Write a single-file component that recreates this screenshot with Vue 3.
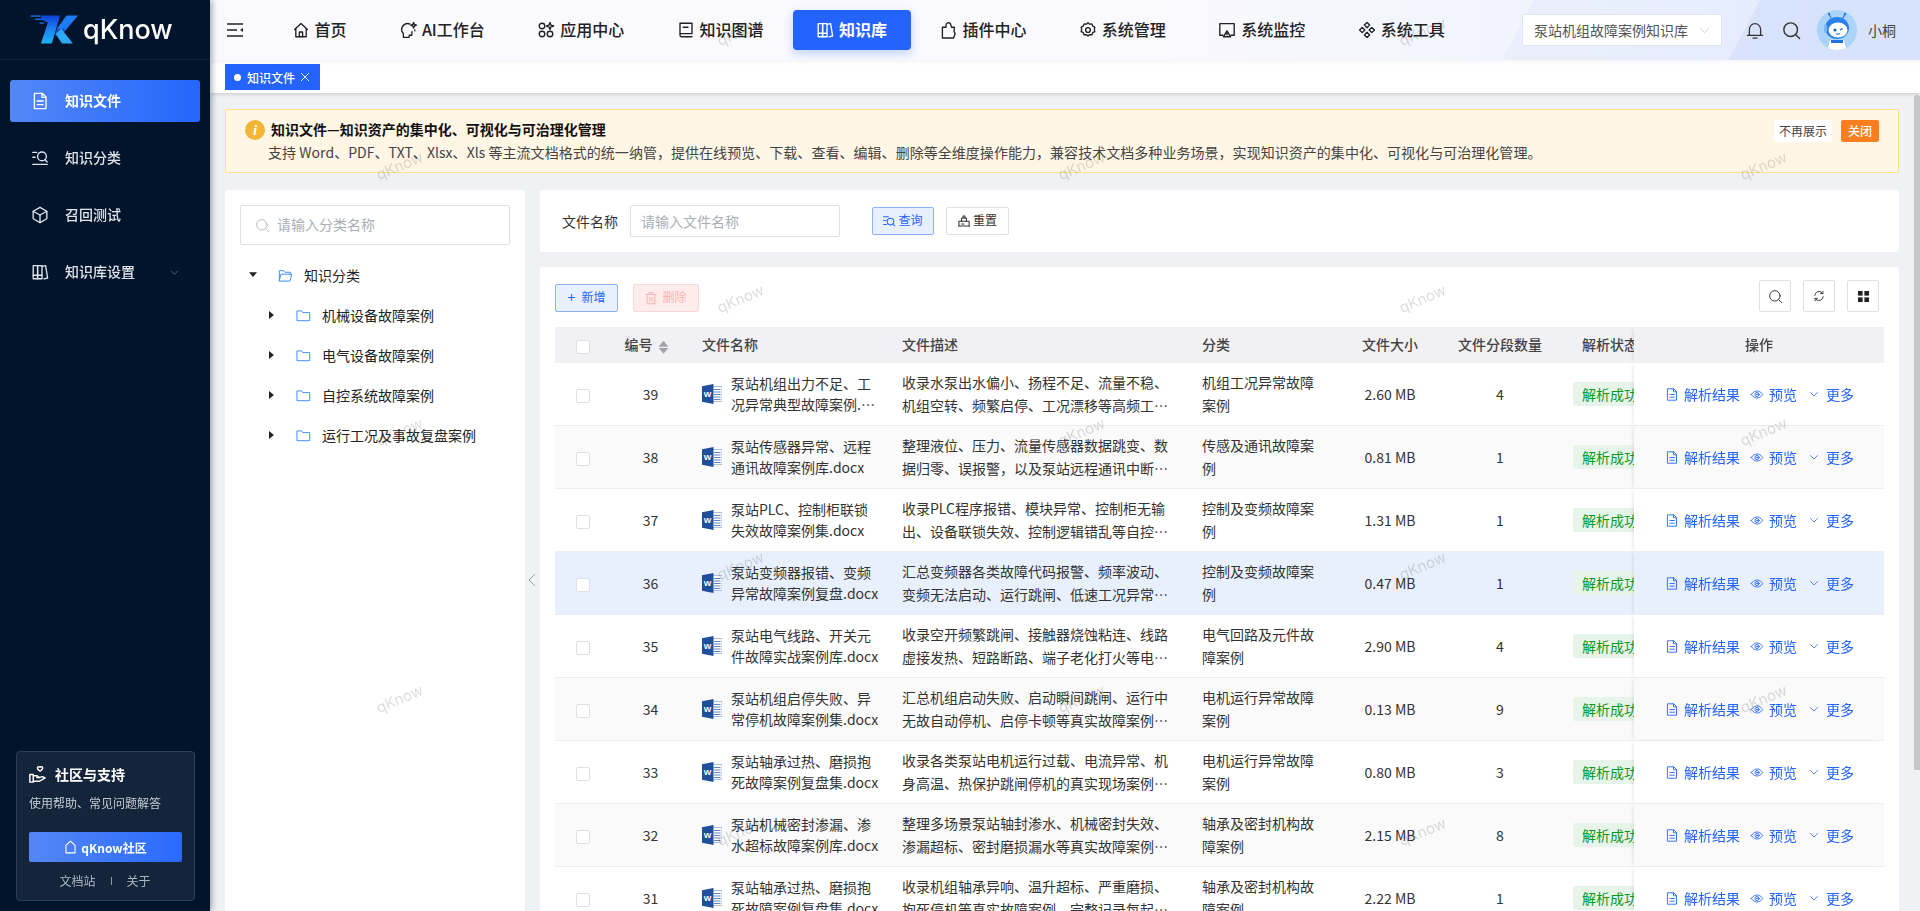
<script setup>
import { h } from 'vue'

const paths = {
  home: ['M4 11.5 12 4l8 7.5', 'M5.5 10.5V20.5h13V10.5', 'M10 20.5v-6h4v6'],
  ai: ['M14.5 4.6A7.5 7.5 0 0 0 4 11.5c0 2.2.9 3.7 2.2 4.9v4.8h7.3v-2.7h3.2l.3-4.5', 'M19 2.5l1 2.5 2.5 1-2.5 1-1 2.5-1-2.5-2.5-1 2.5-1z', 'M20.5 12v1'],
  apps: ['M10.5 7a3.5 3.5 0 1 1-7 0 3.5 3.5 0 0 1 7 0z', 'M10.5 17a3.5 3.5 0 1 1-7 0 3.5 3.5 0 0 1 7 0z', 'M20.5 17a3.5 3.5 0 1 1-7 0 3.5 3.5 0 0 1 7 0z', 'M17 2.5l1.2 3.3 3.3 1.2-3.3 1.2L17 11.5l-1.2-3.300-3.300-1.200 3.300-1.200z'],
  book: ['M4.500 18.500V3.500h15v13H6.500a2 2 0 0 0-2 2 2 2 0 0 0 2 2h13', 'M8.500 8.500h6'],
  library: ['M3.500 4h5.500v16.500H3.500z', 'M9 4h5.500v16.500H9z', 'M14.500 5l4.500-1 2.500 15.500-4.500 1', 'M3.500 16h11'],
  plugin: ['M5 8.500h4.500V6a3.200 3.200 0 0 1 5.500-2l1.500 4.500H20l-.500 5.500 1.500 2.500-2 5.500H5z'],
  gear: ['M12 2.800l2 1.900 2.900-.300 1 2.700 2.600 1.300-.600 2.800.600 2.800-2.600 1.300-1 2.700-2.900-.300-2 1.900-2-1.900-2.900.300-1-2.700-2.600-1.300.600-2.800-.600-2.800 2.600-1.300 1-2.700 2.900.300z', 'M15 12a3 3 0 1 1-6 0 3 3 0 0 1 6 0z'],
  monitor: ['M7 18.500H3V4h18v14.500h-4', 'M12 13l4.500 7.500h-9z', 'M12 16v2'],
  tools: ['M12 2.500l3.300 3.300L12 9.100 8.700 5.800z', 'M6 8.700l3.300 3.300L6 15.300 2.700 12z', 'M18 8.700l3.300 3.300-3.300 3.300-3.300-3.300z', 'M12 14.900l3.300 3.300-3.300 3.300-3.300-3.300z'],
  doc: ['M5 2.500h10l4.500 4.500v14.500H5z', 'M14.500 2.500v5h5', 'M8.500 12h7.500', 'M8.500 16.500h7.500'],
  find: ['M3 5h5', 'M3 11h3', 'M3 20h18', 'M20 10a5.500 5.500 0 1 1-11 0 5.500 5.500 0 0 1 11 0z', 'M18 14l3 3'],
  cube: ['M12 2.500l8.500 4.800v9.400L12 21.500l-8.500-4.800V7.300z', 'M3.500 7.300L12 12l8.500-4.700', 'M12 12v9.500'],
  down: ['M5 9l7 7 7-7'],
  search: ['M19 11a8 8 0 1 1-16 0 8 8 0 0 1 16 0z', 'M17 17l4.500 4.500'],
  bell: ['M5 18V10.500a7 7 0 0 1 14 0V18', 'M2.500 18h19', 'M9.500 21.500h5'],
  house: ['M5 21V9.500L12 3l7 6.500V21z'],
  hand: ['M3 12h4v9H3z', 'M7 13.500h4.500l2.500 2h-3', 'M7 20h7l7-4-3-1.500-4 1', 'M15 3.500c-1.500-1.500-3.500 0-3 1.500.3 1 1.800 2.200 3 3 1.200-.800 2.700-2 3-3 .500-1.500-1.500-3-3-1.500z'],
  eye: ['M2.500 12S6 6 12 6s9.500 6 9.500 6-3.500 6-9.500 6-9.500-6-9.500-6z', 'M15.500 12a3.500 3.500 0 1 1-7 0 3.500 3.500 0 0 1 7 0z', 'M13 12a1 1 0 1 1-2 0 1 1 0 0 1 2 0z'],
  refresh: ['M5 11a7 7 0 0 1 12-4.500l1.500 1.500', 'M19 13a7 7 0 0 1-12 4.500L5.500 16', 'M18.500 4v4h-4', 'M5.500 20v-4h4'],
  reset: ['M3 20.500h18', 'M3.500 20.500v-8h17v8', 'M8 12.500V7h8v5.500', 'M10.500 7V3.500h3V7', 'M8 17h4'],
  trash: ['M3.500 6h17', 'M9 6V3h6v3', 'M5.500 6v15.500h13V6', 'M10 10.500v7', 'M14 10.500v7'],
  query: ['M3 5h8', 'M3 11h4', 'M3 18h5', 'M20 13a5.500 5.500 0 1 1-11 0 5.500 5.500 0 0 1 11 0z', 'M18.500 17l3 3'],
  folder: ['M2.500 5h6.500l2 2.500h10.500v12.500h-19z'],
  folderOpen: ['M2.500 20V4.500h6.500l2 2.500h8.500V10', 'M2.500 20l2.500-10h16.500l-2.500 10z']
}

const Icon = (props) =>
  h(
    'svg',
    { viewBox: '2 2 20 20', fill: 'none', stroke: 'currentColor', 'stroke-width': props.w || 1.7, class: 'icon', 'stroke-linejoin': 'round', 'stroke-linecap': 'round' },
    paths[props.name].map((d) => h('path', { d }))
  )
Icon.props = ['name', 'w']

const nav = [
  { icon: 'home', text: '首页' },
  { icon: 'ai', text: 'AI工作台' },
  { icon: 'apps', text: '应用中心' },
  { icon: 'book', text: '知识图谱' },
  { icon: 'library', text: '知识库', active: true },
  { icon: 'plugin', text: '插件中心' },
  { icon: 'gear', text: '系统管理' },
  { icon: 'monitor', text: '系统监控' },
  { icon: 'tools', text: '系统工具' }
]

const side = [
  { icon: 'doc', text: '知识文件', active: true },
  { icon: 'find', text: '知识分类' },
  { icon: 'cube', text: '召回测试' },
  { icon: 'library', text: '知识库设置', more: true }
]

const treeKids = ['机械设备故障案例', '电气设备故障案例', '自控系统故障案例', '运行工况及事故复盘案例']

const rows = [
  { id: 39, name: '泵站机组出力不足、工况异常典型故障案例.docx', desc: '收录水泵出水偏小、扬程不足、流量不稳、机组空转、频繁启停、工况漂移等高频工况异常故障案例', cat: '机组工况异常故障案例', size: '2.60 MB', n: 4 },
  { id: 38, name: '泵站传感器异常、远程通讯故障案例库.docx', desc: '整理液位、压力、流量传感器数据跳变、数据归零、误报警，以及泵站远程通讯中断等典型故障案例', cat: '传感及通讯故障案例', size: '0.81 MB', n: 1, alt: true },
  { id: 37, name: '泵站PLC、控制柜联锁失效故障案例集.docx', desc: '收录PLC程序报错、模块异常、控制柜无输出、设备联锁失效、控制逻辑错乱等自控系统故障案例', cat: '控制及变频故障案例', size: '1.31 MB', n: 1 },
  { id: 36, name: '泵站变频器报错、变频异常故障案例复盘.docx', desc: '汇总变频器各类故障代码报警、频率波动、变频无法启动、运行跳闸、低速工况异常等真实故障案例', cat: '控制及变频故障案例', size: '0.47 MB', n: 1, hover: true },
  { id: 35, name: '泵站电气线路、开关元件故障实战案例库.docx', desc: '收录空开频繁跳闸、接触器烧蚀粘连、线路虚接发热、短路断路、端子老化打火等电气故障案例', cat: '电气回路及元件故障案例', size: '2.90 MB', n: 4 },
  { id: 34, name: '泵站机组启停失败、异常停机故障案例集.docx', desc: '汇总机组启动失败、启动瞬间跳闸、运行中无故自动停机、启停卡顿等真实故障案例及处置过程', cat: '电机运行异常故障案例', size: '0.13 MB', n: 9, alt: true },
  { id: 33, name: '泵站轴承过热、磨损抱死故障案例复盘集.docx', desc: '收录各类泵站电机运行过载、电流异常、机身高温、热保护跳闸停机的真实现场案例及处置过程', cat: '电机运行异常故障案例', size: '0.80 MB', n: 3 },
  { id: 32, name: '泵站机械密封渗漏、渗水超标故障案例库.docx', desc: '整理多场景泵站轴封渗水、机械密封失效、渗漏超标、密封磨损漏水等真实故障案例及处置过程', cat: '轴承及密封机构故障案例', size: '2.15 MB', n: 8, alt: true },
  { id: 31, name: '泵站轴承过热、磨损抱死故障案例复盘集.docx', desc: '收录机组轴承异响、温升超标、严重磨损、抱死停机等真实故障案例，完整记录每起故障的处置过程', cat: '轴承及密封机构故障案例', size: '2.22 MB', n: 1 }
]

const marks = []
;[
  [400, [167, 433, 700]],
  [741, [33, 300, 567, 833]],
  [1082, [167, 433, 700]],
  [1423, [33, 300, 567, 833]],
  [1764, [167, 433, 700]]
].forEach(([x, ys]) => ys.forEach((y) => marks.push({ left: x - 25 + 'px', top: y - 11 + 'px' })))
</script>

<template>
  <div class="app">
    <aside class="side">
      <div class="logo">
        <svg class="logo-mark" viewBox="28 26 150 96">
          <defs>
            <linearGradient id="lg1" x1="0" y1="0" x2="0" y2="1">
              <stop offset="0" stop-color="#0f3fd8" />
              <stop offset="0.45" stop-color="#1b7df2" />
              <stop offset="1" stop-color="#19b4f5" />
            </linearGradient>
          </defs>
          <rect x="30" y="30" width="30" height="4" fill="#1e78f0" />
          <rect x="44" y="40" width="30" height="4" fill="#1e78f0" />
          <rect x="58" y="52" width="14" height="4" fill="#1e78f0" />
          <polygon points="60,30 122,30 96,118 62,118 84,52 66,44" fill="url(#lg1)" />
          <polygon points="142,30 178,30 138,78 124,90 112,72" fill="#1f7bf5" />
          <polygon points="112,72 138,72 126,92 106,92" fill="#184fb6" />
          <polygon points="126,72 162,118 128,118 108,88" fill="#2fa8f7" />
        </svg>
        <span class="logo-text">qKnow</span>
      </div>
      <nav class="side-menu">
        <div v-for="m in side" :key="m.text" class="side-item" :class="{ on: m.active }">
          <Icon :name="m.icon" class="side-icon" />
          <span>{{ m.text }}</span>
          <Icon v-if="m.more" name="down" class="side-more" w="1.4" />
        </div>
      </nav>
      <div class="support">
        <div class="sup-title"><Icon name="hand" class="sup-icon" /><span>社区与支持</span></div>
        <div class="sup-desc">使用帮助、常见问题解答</div>
        <div class="sup-btn"><Icon name="house" class="sup-house" /><span>qKnow社区</span></div>
        <div class="sup-links"><span>文档站</span><i></i><span>关于</span></div>
      </div>
    </aside>

    <div class="main">
      <header class="top">
        <svg class="fold" viewBox="0 0 16 14" fill="none" stroke="#222" stroke-width="1.5">
          <path d="M0 1h16M0 7h10M0 13h16" />
          <path d="M16 5v4l-3-2z" fill="#222" stroke="none" />
        </svg>
        <nav class="top-nav">
          <div v-for="n in nav" :key="n.text" class="nav-item" :class="{ on: n.active }">
            <Icon :name="n.icon" class="nav-icon" />
            <span>{{ n.text }}</span>
          </div>
        </nav>
        <div class="top-right">
          <div class="kb-select">
            <span>泵站机组故障案例知识库</span>
            <Icon name="down" class="kb-arrow" w="1.3" />
          </div>
          <Icon name="bell" class="tool-bell" w="1.6" />
          <Icon name="search" class="tool-search" w="1.7" />
          <svg class="avatar" viewBox="0 0 40 40">
            <circle cx="20" cy="20" r="20" fill="#a9d4f8" />
            <path d="M14 8l-2-4M26 8l2-4" stroke="#2b78e4" stroke-width="1.2" />
            <circle cx="12" cy="4" r="1.200" fill="#2b78e4" />
            <circle cx="28" cy="4" r="1.200" fill="#2b78e4" />
            <ellipse cx="20" cy="18" rx="12" ry="11" fill="#2b80ec" />
            <ellipse cx="21" cy="20" rx="9.500" ry="7.500" fill="#fff" />
            <circle cx="18" cy="20" r="1.600" fill="#1b5fd0" />
            <path d="M23 20l2.500-1.500" stroke="#1b5fd0" stroke-width="1.300" />
            <path d="M19 23.500q2 1.500 4 0" stroke="#1b5fd0" stroke-width="1" fill="none" />
            <rect x="7" y="14" width="3" height="9" rx="1.500" fill="#7ab6f5" />
            <path d="M13 30h14l2 8c-5 2.500-13 2.500-18 0z" fill="#fff" />
            <path d="M14 30h12v3H14z" fill="#1f6fe0" />
          </svg>
          <span class="user">小桐</span>
        </div>
      </header>

      <div class="tabs">
        <div class="tab"><i class="dot"></i><span>知识文件</span><svg class="tab-x" viewBox="0 0 8 8" stroke="#fff" stroke-width="0.9"><path d="M0 0l8 8M8 0L0 8" /></svg></div>
      </div>

      <div class="view">
        <div class="page">
          <section class="alert">
            <div class="alert-icon">i</div>
            <div class="alert-body">
              <div class="alert-title">知识文件—知识资产的集中化、可视化与可治理化管理</div>
              <div class="alert-desc">支持 Word、PDF、TXT、Xlsx、Xls 等主流文档格式的统一纳管，提供在线预览、下载、查看、编辑、删除等全维度操作能力，兼容技术文档多种业务场景，实现知识资产的集中化、可视化与可治理化管理。</div>
            </div>
            <div class="alert-actions">
              <span class="a-btn">不再展示</span>
              <span class="a-btn close">关闭</span>
            </div>
          </section>

          <div class="body">
            <section class="tree">
              <div class="tree-search"><Icon name="search" class="ts-icon" w="1.3" /><span>请输入分类名称</span></div>
              <div class="tree-row root">
                <i class="caret open"></i>
                <Icon name="folderOpen" class="tfolder" w="1.5" />
                <span>知识分类</span>
              </div>
              <div v-for="k in treeKids" :key="k" class="tree-row kid">
                <i class="caret"></i>
                <Icon name="folder" class="tfolder" w="1.5" />
                <span>{{ k }}</span>
              </div>
            </section>

            <svg class="collapse" viewBox="0 0 8 14" fill="none" stroke="#9a9ea6" stroke-width="1"><path d="M7 1L1 7l6 6" /></svg>

            <div class="right">
              <section class="filter">
                <label>文件名称</label>
                <div class="f-input">请输入文件名称</div>
                <button class="btn primary q"><Icon name="query" class="b-icon" /><span>查询</span></button>
                <button class="btn r"><Icon name="reset" class="b-icon" /><span>重置</span></button>
              </section>

              <section class="list">
                <div class="toolbar">
                  <button class="btn primary add"><span class="plus">+</span><span>新增</span></button>
                  <button class="btn danger"><Icon name="trash" class="b-icon" /><span>删除</span></button>
                  <div class="tool-right">
                    <button class="sq"><Icon name="search" class="sq-i" w="1.5" /></button>
                    <button class="sq"><Icon name="refresh" class="sq-i small" w="1.5" /></button>
                    <button class="sq">
                      <svg class="sq-grid" viewBox="0 0 10 10" fill="#222"><rect width="4.200" height="4.200" /><rect x="5.800" width="4.200" height="4.200" /><rect y="5.800" width="4.200" height="4.200" /><rect x="5.800" y="5.800" width="4.200" height="4.200" /></svg>
                    </button>
                  </div>
                </div>

                <div class="table-wrap">
                  <table>
                    <colgroup>
                      <col style="width:56px" /><col style="width:79px" /><col style="width:200px" /><col style="width:300px" />
                      <col style="width:150px" /><col style="width:100px" /><col style="width:120px" /><col style="width:100px" /><col style="width:250px" />
                    </colgroup>
                    <thead>
                      <tr>
                        <th class="c"><i class="check"></i></th>
                        <th class="c sortable"><span class="th-t">编号</span><span class="sort"><b></b><b></b></span></th>
                        <th><span class="th-t">文件名称</span></th>
                        <th><span class="th-t">文件描述</span></th>
                        <th><span class="th-t">分类</span></th>
                        <th class="c"><span class="th-t">文件大小</span></th>
                        <th class="c"><span class="th-t">文件分段数量</span></th>
                        <th class="c"><span class="th-t">解析状态</span></th>
                        <th class="c fix"><span class="th-t">操作</span></th>
                      </tr>
                    </thead>
                    <tbody>
                      <tr v-for="r in rows" :key="r.id" :class="{ alt: r.alt, hover: r.hover }">
                        <td class="c"><i class="check"></i></td>
                        <td class="c">{{ r.id }}</td>
                        <td class="name-td">
                          <div class="fname">
                            <svg class="word" viewBox="0 0 20 20">
                              <rect x="9" y="2.500" width="11" height="15" fill="#fff" stroke="#8ea5c9" stroke-width="0.7" />
                              <path d="M12 5.500h6.500M12 8h6.500M12 10.500h6.500M12 13h6.500M12 15.500h6.500" stroke="#5f82b8" stroke-width="1" />
                              <path d="M0 2.200L11.500 0v20L0 17.800z" fill="#1f4e9b" />
                              <text x="5.600" y="12.800" class="w-letter">W</text>
                            </svg>
                            <div class="clamp n">{{ r.name }}</div>
                          </div>
                        </td>
                        <td><div class="clamp d">{{ r.desc }}</div></td>
                        <td class="cat">{{ r.cat }}</td>
                        <td class="c">{{ r.size }}</td>
                        <td class="c">{{ r.n }}</td>
                        <td class="c"><span class="tag">解析成功</span></td>
                        <td class="fix">
                          <div class="ops">
                            <Icon name="doc" class="op-i" w="1.5" /><span class="o1">解析结果</span>
                            <Icon name="eye" class="op-i" w="1.4" /><span class="o2">预览</span>
                            <Icon name="down" class="op-i small" w="1.5" /><span>更多</span>
                          </div>
                        </td>
                      </tr>
                    </tbody>
                  </table>
                </div>
              </section>
            </div>
          </div>
        </div>
        <div class="scroll"><i></i></div>
      </div>
    </div>

    <div class="marks">
      <span v-for="(m, i) in marks" :key="i" class="mark" :style="m">qKnow</span>
    </div>
  </div>
</template>

<style>
html, body { margin: 0; height: 100%; overflow: hidden; }
</style>

<style scoped>
.app { position: relative; display: flex; width: 1920px; height: 911px; overflow: hidden; font-family: "Noto Sans CJK SC", "Inter", sans-serif; font-size: 14px; color: #222; background: #f0f1f5; }
.icon { display: block; flex: none; overflow: visible; }

/* sidebar */
.side { position: relative; z-index: 3; width: 210px; flex: none; display: flex; flex-direction: column; background: #00142b; box-shadow: 2px 0 6px rgba(0, 21, 41, .35); }
.logo { height: 60px; box-sizing: border-box; border-bottom: 1px solid #15243a; display: flex; align-items: center; padding-left: 30px; gap: 5px; }
.logo-mark { width: 48px; height: 31px; }
.logo-text { font-family: "Inter", sans-serif; font-size: 27px; font-weight: 500; color: #fff; letter-spacing: 0; }
.side-menu { padding: 20px 10px 0; display: flex; flex-direction: column; gap: 15px; flex: 1; }
.side-item { position: relative; height: 42px; border-radius: 3px; display: flex; align-items: center; padding-left: 22px; gap: 17px; color: #dfe3e8; font-weight: 500; line-height: 20px; }
.side-item span { margin-top: -2px; }
.side-item.on { background: linear-gradient(90deg, #5387f7, #2366fb); color: #fff; font-weight: 700; }
.side-icon { width: 16px; height: 16px; }
.side-more { position: absolute; right: 21px; top: 17px; width: 9px; height: 9px; color: #8c96a5; }
.support { margin: 0 15px 10px 16px; height: 150px; box-sizing: border-box; background: #13243b; border: 1px solid #2c3e58; border-radius: 4px; padding: 12px 12px 0; color: #fff; }
.sup-title { display: flex; align-items: center; height: 20px; gap: 9px; font-weight: 700; }
.sup-icon { width: 17px; height: 17px; }
.sup-desc { font-size: 12px; color: #c5cbd3; margin-top: 9px; line-height: 20px; }
.sup-btn { margin-top: 19px; height: 30px; border-radius: 2px; background: linear-gradient(90deg, #5486f5, #2a6afc); display: flex; align-items: center; justify-content: center; gap: 4px; font-size: 12px; font-weight: 700; }
.sup-house { width: 13px; height: 14px; }
.sup-links { display: flex; justify-content: center; align-items: center; gap: 15px; margin-top: 9px; padding-right: 1px; font-size: 12px; color: #aeb6c2; line-height: 20px; }
.sup-links i { width: 1px; height: 8px; background: #8f99a8; }

/* top */
.main { flex: 1; min-width: 0; display: flex; flex-direction: column; }
.top { position: relative; z-index: 2; height: 60px; flex: none; display: flex; align-items: center; padding-left: 17px; box-shadow: 0 1px 6px rgba(0, 0, 0, .06);
  background: linear-gradient(118deg, transparent 0 89%, rgba(205, 220, 250, .55) 89% 100%), linear-gradient(118deg, transparent 0 76%, rgba(225, 234, 252, .5) 76% 100%), linear-gradient(90deg, #f9f9fe 0 55%, #f0f3fd 80%, #e6ecfc 100%); }
.fold { width: 16px; height: 14px; flex: none; }
.top-nav { display: flex; align-items: center; gap: 5.400px; margin-left: 25.500px; }
.nav-item { height: 40px; box-sizing: border-box; padding: 0 24px; display: flex; align-items: center; gap: 6px; font-size: 16px; font-weight: 500; color: #222; border-radius: 4px; line-height: 24px; }
.nav-item span { margin-top: -2px; }
.nav-item.on { background: #2563ff; color: #fff; font-weight: 700; box-shadow: 0 4px 10px rgba(37, 99, 255, .25); }
.nav-icon { width: 16px; height: 16px; }
.top-right { margin-left: auto; padding-right: 24px; display: flex; align-items: center; }
.kb-select { width: 200px; height: 32px; box-sizing: border-box; background: #fff; border: 1px solid #dfe4ee; border-radius: 2px; display: flex; align-items: center; padding: 0 11px; justify-content: space-between; color: #555; }
.kb-arrow { width: 11px; height: 11px; color: #b4b8c0; }
.tool-bell { width: 16px; height: 17px; margin-left: 25px; color: #333; }
.tool-search { width: 17px; height: 17px; margin-left: 20px; color: #333; }
.avatar { width: 40px; height: 40px; margin-left: 17px; flex: none; }
.user { margin-left: 11px; color: #444; }

/* tabs */
.tabs { position: relative; z-index: 1; height: 33px; flex: none; box-sizing: border-box; padding: 4px 15px 0; background: #fff; box-shadow: 0 1px 4px rgba(0, 0, 0, .18); }
.tab { width: 95px; height: 26px; box-sizing: border-box; background: #2563ff; color: #fff; font-size: 12px; font-weight: 500; display: flex; align-items: center; padding-left: 9px; }
.dot { width: 7px; height: 7px; border-radius: 50%; background: #fff; margin-right: 6px; }
.tab-x { width: 8px; height: 8px; margin-left: 6px; }

/* view */
.view { flex: 1; min-height: 0; display: flex; }
.page { flex: 1; min-width: 0; display: flex; flex-direction: column; padding: 16px 15px 0; }
.scroll { width: 6px; flex: none; padding-top: 2px; }
.scroll i { display: block; height: 675px; background: #c4c6ca; border-radius: 3px 3px 0 0; }

.alert { position: relative; height: 64px; flex: none; box-sizing: border-box; background: #fff6e5; border: 1px solid #fde08a; border-radius: 2px; display: flex; padding-left: 19px; }
.alert-icon { width: 20px; height: 20px; margin-top: 10px; border-radius: 50%; background: #f2b535; color: #fff; text-align: center; font: italic 700 15px/20px "Liberation Serif", serif; }
.alert-body { margin-left: 3px; padding-top: 9px; }
.alert-title { margin-left: 3px; font-weight: 700; line-height: 21px; color: #111; }
.alert-desc { margin-top: 2px; line-height: 21px; color: #444; white-space: nowrap; letter-spacing: .04px; }
.alert-actions { position: absolute; right: 19px; top: 10px; display: flex; gap: 9px; }
.a-btn { width: 58px; height: 22px; background: #fff; font-size: 12px; text-align: center; line-height: 22px; border-radius: 2px; color: #444; }
.a-btn.close { width: 38px; background: #fb7f1f; color: #fff; font-weight: 500; }

.body { position: relative; flex: 1; min-height: 0; display: flex; gap: 15px; margin-top: 17px; }
.tree { width: 300px; flex: none; box-sizing: border-box; background: #fff; border-radius: 2px 2px 0 0; padding: 15px; }
.tree-search { height: 40px; box-sizing: border-box; border: 1px solid #dcdfe8; border-radius: 2px; display: flex; align-items: center; padding-left: 15px; gap: 8px; color: #aaaeb6; line-height: 20px; }
.tree-search span { margin-top: -2px; }
.ts-icon { width: 13px; height: 13px; }
.tree-row { height: 40px; display: flex; align-items: center; color: #222; }
.tree-row.root { margin-top: 10px; padding-left: 9px; }
.tree-row.root .caret { margin-right: 22px; }
.tree-row.kid { padding-left: 29px; }
.tree-row.kid .caret { margin-right: 20px; }
.caret { width: 8px; height: 8px; flex: none; background: #222; clip-path: polygon(0 0, 62% 50%, 0 100%); }
.caret.open { clip-path: polygon(0 15%, 100% 15%, 50% 75%); }
.tfolder { width: 13px; height: 13px; color: #3d8ef5; margin-right: 12px; }
.collapse { position: absolute; left: 303px; top: 383px; width: 8px; height: 14px; }

.right { flex: 1; min-width: 0; display: flex; flex-direction: column; gap: 15px; }
.filter { height: 62px; flex: none; box-sizing: border-box; background: #fff; border-radius: 2px; display: flex; align-items: center; padding-left: 22px; }
.filter label { width: 56px; margin-right: 12px; line-height: 20px; color: #333; }
.f-input { width: 210px; height: 32px; box-sizing: border-box; border: 1px solid #dcdfe8; border-radius: 2px; padding-left: 10px; line-height: 30px; color: #aaaeb6; }
.btn { height: 28px; box-sizing: border-box; border: 1px solid #dcdfe6; border-radius: 2px; background: #fff; color: #333; font: inherit; font-size: 12px; line-height: 18px; display: flex; align-items: center; justify-content: center; gap: 3px; padding: 0; cursor: default; }
.btn span { margin-top: -2px; }
.btn.primary { background: #e8f0ff; border-color: #8fb0ff; color: #2563ff; }
.btn.danger { background: #feecec; border-color: #fcd9d9; color: #f9b3b3; width: 66px; margin-left: 15px; gap: 5px; }
.btn.q { width: 62px; margin-left: 32px; }
.btn.r { width: 63px; margin-left: 12px; }
.btn.add { width: 63px; gap: 6px; }
.b-icon { width: 12px; height: 12px; }
.plus { font-size: 14px; line-height: 1; }

.list { flex: 1; min-height: 0; background: #fff; border-radius: 2px 2px 0 0; padding: 13px 15px 0; overflow: hidden; }
.toolbar { display: flex; align-items: flex-end; height: 32px; margin-bottom: 15px; }
.tool-right { margin-left: auto; padding-right: 5px; display: flex; gap: 12px; }
.sq { width: 32px; height: 32px; box-sizing: border-box; background: #fff; border: 1px solid #dcdfe6; border-radius: 2px; padding: 0; display: flex; align-items: center; justify-content: center; color: #333; }
.sq-i { width: 13px; height: 13px; }
.sq-i.small { width: 12px; height: 12px; }
.sq-grid { width: 11px; height: 11px; }

.table-wrap { overflow: hidden; }
table { width: 1355px; table-layout: fixed; border-collapse: separate; border-spacing: 0; }
th { height: 36px; box-sizing: border-box; padding: 0 12px; background: #f0f0f5; color: #444; font-weight: 500; text-align: left; white-space: nowrap; }
.th-t { position: relative; top: -1px; }
td { height: 63px; box-sizing: border-box; padding: 0 12px; border-bottom: 1px solid #ebedf3; color: #333; background: #fff; }
th.c, td.c { text-align: center; }
tr.alt td { background: #fafafa; }
tr.hover td { background: #e8f0fe; }
.fix { position: sticky; right: 0; box-shadow: -3px 0 4px -2px rgba(0, 0, 0, .1); }
.check { display: inline-block; width: 14px; height: 14px; box-sizing: border-box; background: #fff; border: 1px solid #dcdfe6; border-radius: 2px; vertical-align: middle; }
th.sortable { padding: 0 8px 0 0; }
.sort { display: inline-block; vertical-align: middle; margin-left: 6px; }
.sort b { display: block; width: 10px; height: 6px; background: #a0a3a8; clip-path: polygon(50% 0, 100% 100%, 0 100%); }
.sort b + b { margin-top: 1px; clip-path: polygon(0 0, 100% 0, 50% 100%); }
.name-td { padding-right: 10px; }
.fname { display: flex; align-items: center; gap: 9px; }
.word { width: 20px; height: 20px; flex: none; }
.w-letter { font: 700 8px "Liberation Sans", sans-serif; fill: #fff; text-anchor: middle; }
.clamp { display: -webkit-box; -webkit-box-orient: vertical; -webkit-line-clamp: 2; overflow: hidden; word-break: break-all; }
.clamp.n { line-height: 21px; flex: 1; min-width: 0; color: #333; }
.clamp.d { line-height: 23px; color: #333; }
.cat { line-height: 23px; padding-right: 26px; }
.tag { display: block; width: 74px; margin: 0 auto; height: 24px; line-height: 24px; background: #e6f4ea; color: #0a9a1a; border-radius: 2px; white-space: nowrap; }
.ops { display: flex; align-items: center; color: #2563ff; padding-left: 20px; white-space: nowrap; }
.op-i { width: 12px; height: 13px; margin-right: 6px; }
.op-i.small { width: 10px; height: 10px; margin-right: 7px; }
.o1 { margin-right: 11px; }
.o2 { margin-right: 12px; }

/* watermark */
.marks { position: absolute; inset: 0; z-index: 2; pointer-events: none; }
.mark { position: absolute; font-family: "Inter", sans-serif; font-size: 15px; color: rgba(0, 0, 0, .14); transform: rotate(-23deg); white-space: nowrap; }
</style>
